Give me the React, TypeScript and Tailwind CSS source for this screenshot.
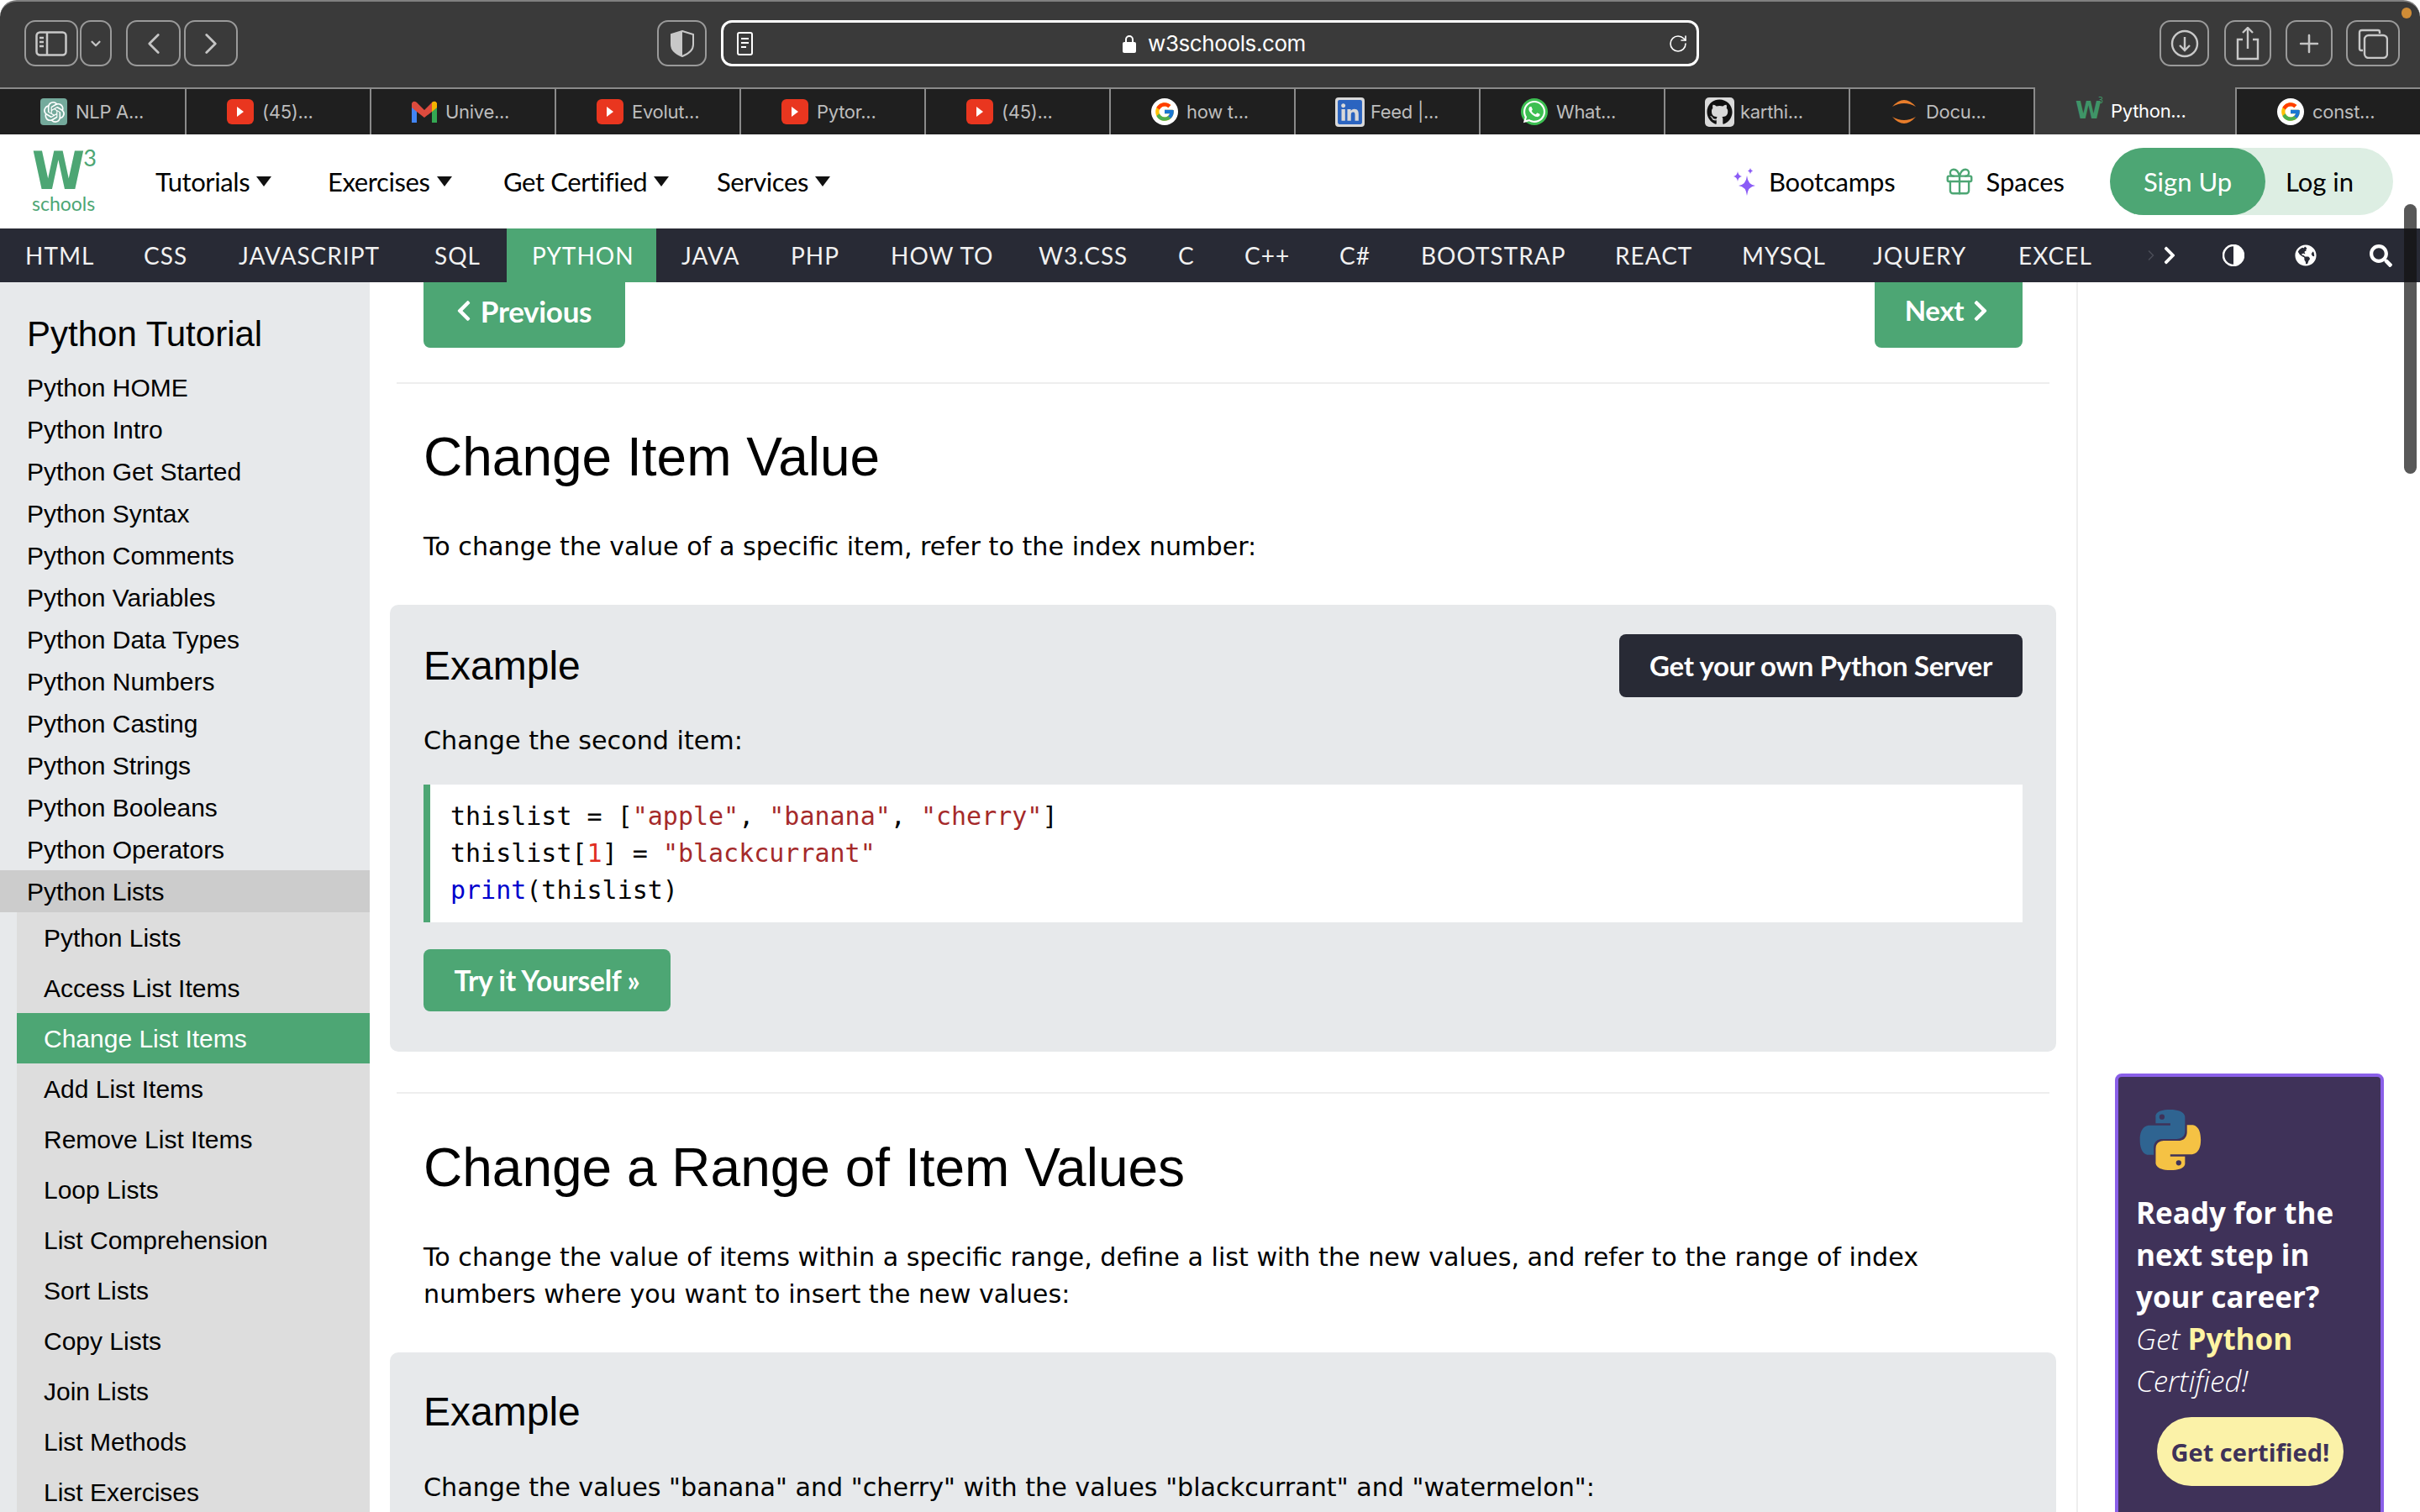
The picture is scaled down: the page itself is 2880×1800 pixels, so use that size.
import { ChevronLeft, ChevronRight, ChevronDown, Gift, Plus, RotateCw } from 'lucide-react'
import { FaChevronLeft, FaChevronRight, FaGithub, FaGlobeAmericas, FaLinkedin, FaSearch, FaWhatsapp } from 'react-icons/fa'
import { FcGoogle } from 'react-icons/fc'
import { SiOpenai } from 'react-icons/si'

const sans = "font-['Lato',sans-serif]"

const YouTube = () => (
  <div className="w-[32px] h-[30px] rounded-[6px] bg-[#e9361f] flex items-center justify-center">
    <svg width="10" height="14" viewBox="0 0 10 14"><polygon points="1,1 9,7 1,13" fill="#fff" /></svg>
  </div>
)
const Google = () => (
  <div className="w-[32px] h-[32px] rounded-full bg-white flex items-center justify-center">
    <FcGoogle size={26} />
  </div>
)
const Gmail = () => (
  <svg width="30" height="26" viewBox="0 0 30 26">
    <path d="M0 3 L0 26 L6 26 L6 9 Z" fill="#4285f4" />
    <path d="M30 3 L30 26 L24 26 L24 9 Z" fill="#34a853" />
    <path d="M0 3 Q2 -1 6 2 L15 11 L24 2 Q28 -1 30 3 L30 8 L24 13 L15 20 L6 13 L0 8 Z" fill="#dd4b3e" />
    <path d="M24 2 Q28 -1 30 3 L30 8 L24 13 Z" fill="#f4b400" />
  </svg>
)

const tabs = [
  { label: 'NLP A...', w: 'w-[222px]', icon: <div className="w-[32px] h-[32px] rounded-[4px] bg-[#74aa9c] flex items-center justify-center text-white"><SiOpenai size={25} /></div> },
  { label: '(45)...', w: 'w-[220px]', icon: <YouTube /> },
  { label: 'Unive...', w: 'w-[220px]', icon: <Gmail /> },
  { label: 'Evolut...', w: 'w-[220px]', icon: <YouTube /> },
  { label: 'Pytor...', w: 'w-[220px]', icon: <YouTube /> },
  { label: '(45)...', w: 'w-[220px]', icon: <YouTube /> },
  { label: 'how t...', w: 'w-[220px]', icon: <Google /> },
  { label: 'Feed |...', w: 'w-[220px]', icon: <div className="w-[35px] h-[35px] -mr-[3px] -ml-[1px] rounded-[4px] bg-[#d9d9d9] flex items-center justify-center text-[#2b64c0]"><FaLinkedin size={33} /></div> },
  { label: 'What...', w: 'w-[220px]', icon: <div className="w-[32px] h-[32px] rounded-full bg-[#3dbf52] flex items-center justify-center text-white"><FaWhatsapp size={30} /></div> },
  { label: 'karthi...', w: 'w-[220px]', icon: <div className="w-[35px] h-[35px] -mr-[3px] -ml-[1px] rounded-[5px] bg-[#d9d9d9] flex items-center justify-center text-[#111]"><FaGithub size={31} /></div> },
  {
    label: 'Docu...',
    w: 'w-[220px]',
    icon: (
      <svg width="32" height="32" viewBox="0 0 32 32">
        <path d="M2 10 Q16 -6 30 10 Q16 2 2 10 Z" fill="#e87d2b" />
        <path d="M2 22 Q16 38 30 22 Q16 30 2 22 Z" fill="#e87d2b" />
      </svg>
    ),
  },
  {
    label: 'Python...',
    w: 'w-[240px]',
    active: true,
    icon: (
      <span className="relative w-[32px] text-[28px] leading-none font-bold text-[#3f9467] font-['DejaVu_Sans']">
        W<span className="absolute right-[-1px] top-[-3px] text-[10px] font-normal">3</span>
      </span>
    ),
  },
  { label: 'const...', w: 'flex-1', icon: <Google /> },
]

const subjects = [
  { label: 'HTML', w: 'w-[141px]' },
  { label: 'CSS', w: 'w-[113px]' },
  { label: 'JAVASCRIPT', w: 'w-[233px]' },
  { label: 'SQL', w: 'w-[116px]' },
  { label: 'PYTHON', w: 'w-[178px]', active: true },
  { label: 'JAVA', w: 'w-[130px]' },
  { label: 'PHP', w: 'w-[119px]' },
  { label: 'HOW TO', w: 'w-[176px]' },
  { label: 'W3.CSS', w: 'w-[166px]' },
  { label: 'C', w: 'w-[79px]' },
  { label: 'C++', w: 'w-[113px]' },
  { label: 'C#', w: 'w-[97px]' },
  { label: 'BOOTSTRAP', w: 'w-[231px]' },
  { label: 'REACT', w: 'w-[151px]' },
  { label: 'MYSQL', w: 'w-[156px]' },
  { label: 'JQUERY', w: 'w-[173px]' },
  { label: 'EXCEL', w: 'w-[145px]' },
]

const sideItems = ['Python HOME', 'Python Intro', 'Python Get Started', 'Python Syntax', 'Python Comments', 'Python Variables', 'Python Data Types', 'Python Numbers', 'Python Casting', 'Python Strings', 'Python Booleans', 'Python Operators']
const subItems = ['Python Lists', 'Access List Items', 'Change List Items', 'Add List Items', 'Remove List Items', 'Loop Lists', 'List Comprehension', 'Sort Lists', 'Copy Lists', 'Join Lists', 'List Methods', 'List Exercises']

const menus = [
  { label: 'Tutorials', cls: 'ml-[70px] w-[205px]' },
  { label: 'Exercises', cls: 'w-[209px]' },
  { label: 'Get Certified', cls: 'w-[254px]' },
  { label: 'Services', cls: 'w-[140px]' },
]

function ToolButton({ w, children, cls = '' }: { w: string; children?: React.ReactNode; cls?: string }) {
  return <div className={`${w} ${cls} h-[55px] rounded-[13px] border-2 border-[#9a9a9a] flex items-center justify-center text-[#c4c4c4] shrink-0`}>{children}</div>
}

function Example({ children }: { children: React.ReactNode }) {
  return (
    <div className="mx-[-40px] w-[1983px] bg-[#e7e9eb] rounded-[10px] px-[40px] mt-[47px]">
      {children}
    </div>
  )
}

export default function App() {
  return (
    <div className="relative w-[2880px] h-[1800px] overflow-hidden bg-white font-['Liberation_Sans',sans-serif] text-black">
      {/* browser chrome */}
      <div className="h-[104px] bg-[#3a3a3a] rounded-t-[20px] border-t-2 border-[#808080] flex items-start pt-[22px] pl-[29px]">
        <ToolButton w="w-[64px]">
          <svg width="38" height="30" viewBox="0 0 38 30" fill="none" stroke="#c8c8c8" strokeWidth="2.5">
            <rect x="1.5" y="1.5" width="35" height="27" rx="4" />
            <path d="M14 1.5 V28.5" />
            <path d="M5 8 H10 M5 13 H10 M5 18 H10" />
          </svg>
        </ToolButton>
        <ToolButton w="w-[38px]" cls="ml-[2px]"><ChevronDown size={18} strokeWidth={3} /></ToolButton>
        <ToolButton w="w-[65px]" cls="ml-[17px]"><ChevronLeft size={42} strokeWidth={1.6} /></ToolButton>
        <ToolButton w="w-[64px]" cls="ml-[4px] text-[#808080]"><ChevronRight size={42} strokeWidth={1.6} /></ToolButton>
        <ToolButton w="w-[59px]" cls="ml-[499px]">
          <svg width="28" height="32" viewBox="0 0 28 32">
            <path d="M14 1 L27 5 V17 Q27 26 14 31 Q1 26 1 17 V5 Z" fill="none" stroke="#c8c8c8" strokeWidth="2" />
            <path d="M14 1 L1 5 V17 Q1 26 14 31 Z" fill="#c8c8c8" />
          </svg>
        </ToolButton>
        <div className="ml-[17px] w-[1164px] h-[55px] rounded-[13px] border-[3px] border-white flex items-center pl-[16px] pr-[10px] shrink-0">
          <svg width="20" height="28" viewBox="0 0 20 28" fill="none" stroke="#fff" strokeWidth="2">
            <rect x="1" y="1" width="17" height="26" rx="2" />
            <path d="M5 8 H14 M5 13 H14 M5 18 H11" />
          </svg>
          <div className="flex-1 flex items-center justify-center gap-[14px] pl-[8px]">
            <svg width="16" height="22" viewBox="0 0 16 22">
              <path d="M4 9 V6 a4 4 0 0 1 8 0 V9" fill="none" stroke="#fff" strokeWidth="2" />
              <rect x="0" y="9" width="16" height="13" rx="2" fill="#fff" />
            </svg>
            <span className="font-['Inter'] text-[26px] leading-none text-white tracking-[-0.4px]">w3schools.com</span>
          </div>
          <RotateCw size={24} color="#fff" strokeWidth={1.6} />
        </div>
        <ToolButton w="w-[59px]" cls="ml-[548px]">
          <svg width="34" height="34" viewBox="0 0 34 34" fill="none" stroke="#c8c8c8" strokeWidth="2.4">
            <circle cx="17" cy="17" r="15" />
            <path d="M17 9 V25 M11 19 L17 25 L23 19" />
          </svg>
        </ToolButton>
        <ToolButton w="w-[56px]" cls="ml-[18px]">
          <svg width="30" height="40" viewBox="0 0 30 40" fill="none" stroke="#c8c8c8" strokeWidth="2.4">
            <path d="M9 15 H3 V38 H27 V15 H21" />
            <path d="M15 1 V26 M9 7 L15 1 L21 7" />
          </svg>
        </ToolButton>
        <ToolButton w="w-[56px]" cls="ml-[17px]"><Plus size={34} strokeWidth={1.8} /></ToolButton>
        <ToolButton w="w-[64px]" cls="ml-[16px]">
          <svg width="36" height="36" viewBox="0 0 36 36" fill="none" stroke="#c8c8c8" strokeWidth="2.4">
            <path d="M6 26 H4 Q2 26 2 24 V5 Q2 2 5 2 H24 Q26 2 26 4 V6" />
            <rect x="8" y="8" width="27" height="27" rx="5" />
          </svg>
        </ToolButton>
      </div>
      <div className="absolute left-[2858px] top-[9px] w-[12px] h-[13px] rounded-full bg-[#cf8c36]" />

      {/* tabs */}
      <div className="h-[56px] flex bg-[#1f1f1f] border-t-2 border-[#8a8a8a]">
        {tabs.map((t, i) => (
          <div
            key={i}
            className={`${t.w} pl-[48px] flex items-center gap-[10px] border-r-2 border-[#8a8a8a] last:border-r-0 ${t.active ? 'bg-[#3a3a3a] text-white -mt-[2px] h-[56px]' : 'text-[#bdbdbd]'}`}
          >
            {t.icon}
            <span className="font-['Inter'] text-[22px] leading-none tracking-[-0.3px]">{t.label}</span>
          </div>
        ))}
      </div>

      {/* site header */}
      <div className="h-[112px] flex items-center pl-[38px] pr-[32px]">
        <div className="w-[77px] shrink-0 text-[#4da674]">
          <div className="relative h-[50px]">
            <span className="absolute left-0 top-0 origin-left scale-x-[0.92] text-[62px] leading-[50px] font-bold font-['DejaVu_Sans']">W</span>
            <span className="absolute right-0 top-[-5px] text-[27px] leading-[27px] font-['Lato']">3</span>
          </div>
          <div className={`mt-[1px] text-[23px] leading-[24px] ${sans}`}>schools</div>
        </div>
        {menus.map((m) => (
          <div key={m.label} className={`${m.cls} flex items-center gap-[8px] ${sans} text-[31px] leading-none tracking-[-0.4px]`}>
            {m.label}
            <svg width="18" height="12" viewBox="0 0 18 12"><polygon points="0,0 18,0 9,12" fill="#111" /></svg>
          </div>
        ))}
        <svg className="ml-auto" width="26" height="33" viewBox="0 0 26 33" fill="#8b5cf6">
          <path d="M16 9 Q17 20 26 21 Q17 22 16 33 Q15 22 6 21 Q15 20 16 9 Z" />
          <path d="M5 4 Q5.6 9 10 10 Q5.6 11 5 16 Q4.4 11 0 10 Q4.4 9 5 4 Z" />
          <path d="M20 0 Q20.4 3 23 3.5 Q20.4 4 20 7 Q19.6 4 17 3.5 Q19.6 3 20 0 Z" />
        </svg>
        <span className={`ml-[16px] ${sans} text-[31px] leading-none tracking-[-0.2px]`}>Bootcamps</span>
        <Gift className="ml-[58px]" size={38} color="#4da674" strokeWidth={1.5} />
        <span className={`ml-[12px] ${sans} text-[31px] leading-none`}>Spaces</span>
        <div className="ml-[54px] w-[337px] h-[80px] rounded-full bg-[#ddeee3] flex items-center">
          <div className={`w-[185px] h-[80px] rounded-full bg-[#4da674] text-white flex items-center justify-center ${sans} text-[31px]`}>Sign Up</div>
          <span className={`ml-[24px] ${sans} text-[31px]`}>Log in</span>
        </div>
      </div>

      {/* subject bar */}
      <div className="h-[64px] bg-[#282a35] flex text-[#f1f1f1] font-['Lato'] text-[28px] tracking-[1px]">
        {subjects.map((s) => (
          <div key={s.label} className={`${s.w} pl-[30px] flex items-center shrink-0 ${s.active ? 'bg-[#4da674] text-white' : ''}`}>{s.label}</div>
        ))}
        <div className="ml-[33px] flex items-center text-[#4a4c57]"><ChevronRight size={20} /></div>
        <div className="flex items-center text-white"><FaChevronRight size={24} /></div>
        <div className="ml-[51px] flex items-center">
          <svg width="26" height="26" viewBox="0 0 26 26">
            <circle cx="13" cy="13" r="12" fill="none" stroke="#fff" strokeWidth="2.5" />
            <path d="M13 1 a12 12 0 0 0 0 24 Z" fill="#fff" transform="rotate(180 13 13)" />
          </svg>
        </div>
        <div className="ml-[60px] flex items-center text-white"><FaGlobeAmericas size={26} /></div>
        <div className="ml-[63px] flex items-center text-white"><FaSearch size={27} /></div>
      </div>

      <div className="h-[1464px] flex overflow-hidden">
        {/* sidebar */}
        <div className="w-[440px] shrink-0 bg-[#e7e9eb] pt-[34px]">
          <h3 className="pl-[32px] text-[42px] leading-[56px] h-[56px] mb-[10px]">Python Tutorial</h3>
          {sideItems.map((s) => (
            <div key={s} className="h-[50px] pl-[32px] flex items-center text-[30px]">{s}</div>
          ))}
          <div className="h-[50px] pl-[32px] flex items-center text-[30px] bg-[#cccccc]">Python Lists</div>
          <div className="ml-[20px]">
            {subItems.map((s) => (
              <div key={s} className={`h-[60px] pl-[32px] flex items-center text-[30px] ${s === 'Change List Items' ? 'bg-[#4da674] text-white' : 'bg-[#dddddd]'}`}>{s}</div>
            ))}
          </div>
        </div>

        {/* main */}
        <div className="w-[2033px] shrink-0 border-r-2 border-[#eeeeee] pl-[64px] pr-[64px]">
          <div className="flex justify-between h-[78px]">
            <div className={`w-[240px] rounded-b-[8px] bg-[#4da674] text-white flex items-center justify-center gap-[6px] pb-[10px] pr-[6px] ${sans} font-bold text-[35px] tracking-[-0.3px]`}>
              <FaChevronLeft size={28} />Previous
            </div>
            <div className={`w-[176px] rounded-b-[8px] bg-[#4da674] text-white flex items-center justify-center gap-[6px] pb-[10px] ${sans} font-bold text-[33px] tracking-[-0.3px]`}>
              Next<FaChevronRight size={28} />
            </div>
          </div>
          <div className="mt-[41px] mx-[-32px] h-[2px] bg-[#eeeeee]" />
          <h2 className="mt-[49px] text-[64px] leading-[76px]">Change Item Value</h2>
          <p className="mt-[47px] font-['DejaVu_Sans'] text-[30.2px] leading-[44px]">To change the value of a specific item, refer to the index number:</p>

          <Example>
            <div className="pt-[35px] flex items-center justify-between">
              <h3 className="text-[48px] leading-[60px]">Example</h3>
              <div className={`w-[480px] h-[75px] rounded-[8px] bg-[#282a35] text-white flex items-center justify-center ${sans} font-bold text-[33px] tracking-[-0.3px]`}>Get your own Python Server</div>
            </div>
            <p className="mt-[30px] font-['DejaVu_Sans'] text-[30.2px] leading-[44px] h-[44px]">Change the second item:</p>
            <div className="mt-[30px] h-[164px] bg-white border-l-[8px] border-[#4da674] pl-[24px] py-[16px] font-['DejaVu_Sans_Mono',monospace] text-[30px] leading-[44px] whitespace-pre">
              <div>thislist = [<span className="text-[#a52a2a]">"apple"</span>, <span className="text-[#a52a2a]">"banana"</span>, <span className="text-[#a52a2a]">"cherry"</span>]</div>
              <div>thislist[<span className="text-[#e02e1f]">1</span>] = <span className="text-[#a52a2a]">"blackcurrant"</span></div>
              <div><span className="text-[#0000cd]">print</span>(thislist)</div>
            </div>
            <div className={`mt-[32px] w-[294px] h-[74px] rounded-[8px] bg-[#4da674] text-white flex items-center justify-center ${sans} font-bold text-[33.5px] tracking-[-0.3px]`}>Try it Yourself »</div>
            <div className="h-[48px]" />
          </Example>

          <div className="mt-[48px] mx-[-32px] h-[2px] bg-[#eeeeee]" />
          <h2 className="mt-[50px] text-[64px] leading-[76px]">Change a Range of Item Values</h2>
          <p className="mt-[47px] font-['DejaVu_Sans'] text-[30.2px] leading-[44px]">To change the value of items within a specific range, define a list with the new values, and refer to the range of index numbers where you want to insert the new values:</p>

          <Example>
            <h3 className="pt-[41px] text-[48px] leading-[60px]">Example</h3>
            <p className="mt-[38px] font-['DejaVu_Sans'] text-[30.2px] leading-[44px]">Change the values "banana" and "cherry" with the values "blackcurrant" and "watermelon":</p>
            <div className="h-[60px]" />
          </Example>
        </div>

        {/* ad column */}
        <div className="flex-1 pl-[44px] pt-[942px]">
          <div className="w-[320px] h-[700px] rounded-t-[8px] border-4 border-[#8a5fe8] bg-[#3f3259] pl-[21px] pt-[39px] font-['Open_Sans'] text-[35px] leading-[50px] text-white">
            <svg className="ml-[4px]" width="74" height="72" viewBox="0 0 111 110">
              <path d="M54.9 0C26.8 0 28.6 12.2 28.6 12.2l0 12.6h26.8v3.8H17.9S0 26.6 0 54.9s15.7 27.3 15.7 27.3h9.4V69s-.5-15.7 15.4-15.7h26.6s14.9.2 14.9-14.4V14.7S84.3 0 54.9 0zM40.1 8.5a4.8 4.8 0 1 1 0 9.6 4.8 4.8 0 0 1 0-9.6z" fill="#2f6491" />
              <path d="M55.7 110c28.1 0 26.3-12.2 26.3-12.2V85.2H55.2v-3.8h37.5s18 2 18-26.3-15.7-27.3-15.7-27.3h-9.4V41s.5 15.7-15.4 15.7H43.6s-14.9-.2-14.9 14.4v24.2S26.3 110 55.7 110zm14.8-8.5a4.8 4.8 0 1 1 0-9.6 4.8 4.8 0 0 1 0 9.6z" fill="#f5c244" />
            </svg>
            <div className="mt-[26px] font-bold">
              <div>Ready for the</div>
              <div>next step in</div>
              <div>your career?</div>
            </div>
            <div className="italic font-light">Get <span className="not-italic font-bold text-[#fff4a3]">Python</span></div>
            <div className="italic font-light">Certified!</div>
            <div className="mt-[18px] ml-[25px] w-[222px] h-[82px] rounded-full bg-[#fbf2a8] text-[#3f3259] flex items-center justify-center font-bold text-[29px] leading-none">Get certified!</div>
          </div>
        </div>
      </div>

      {/* overlay scrollbar */}
      <div className="absolute left-[2861px] top-[243px] w-[15px] h-[321px] rounded-full bg-[#111]/70" />
    </div>
  )
}
